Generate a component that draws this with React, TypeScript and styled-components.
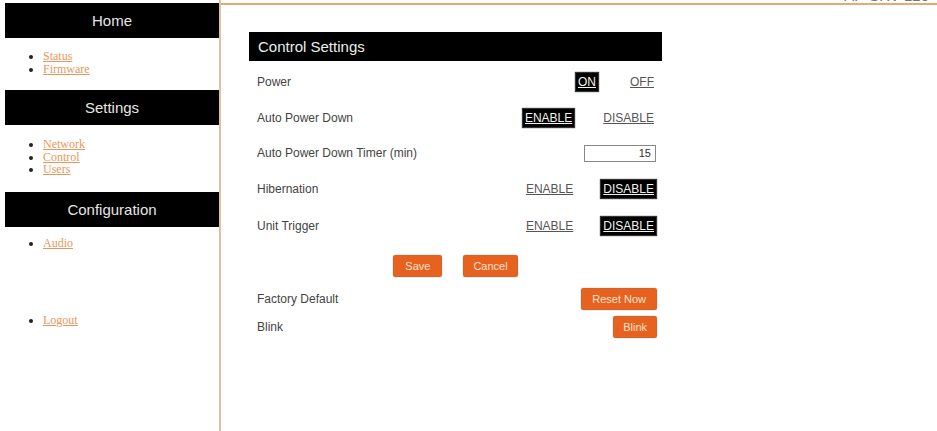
import { useState } from "react";
import styled, { createGlobalStyle, css } from "styled-components";

const GlobalStyle = createGlobalStyle`
  html, body {
    margin: 0;
    padding: 0;
    background: #fff;
  }
  body {
    font-family: "Liberation Sans", Arial, sans-serif;
  }
`;

const Page = styled.div`
  display: flex;
  min-height: 431px;
  width: 937px;
  overflow: hidden;
`;

const Sidebar = styled.nav`
  flex: 0 0 214px;
  padding: 3px 0 0 5px;
  border-right: 2px solid #dcc29f;
`;

const SideHeader = styled.div`
  height: 35px;
  display: flex;
  align-items: center;
  justify-content: center;
  background: #000;
  color: #e6e6e6;
  font-size: 15px;
`;

const LinkList = styled.ul<{ $top: number; $bottom: number }>`
  margin: ${(p) => p.$top}px 0 ${(p) => p.$bottom}px;
  padding-left: 38px;
  font-family: "Liberation Serif", "Times New Roman", serif;
  font-size: 12px;
  line-height: 12.5px;
  color: #222;
`;

const NavLink = styled.a`
  color: #e8975a;
  text-decoration: underline;
`;

const Main = styled.main`
  flex: 1;
  display: flex;
  flex-direction: column;
`;

const TopBar = styled.header`
  height: 3px;
  overflow: hidden;
  display: flex;
  justify-content: flex-end;
  align-items: flex-end;
  padding-right: 8px;
  border-bottom: 2px solid #eaa770;
  color: #777;
  font-size: 15px;
  line-height: 15px;
`;

const Panel = styled.section`
  width: 413px;
  margin: 27px 0 0 28px;
`;

const PanelTitle = styled.h2`
  margin: 0 0 2px;
  height: 29px;
  display: flex;
  align-items: center;
  padding-left: 9px;
  background: #000;
  color: #ededed;
  font-size: 15px;
  font-weight: normal;
`;

const Row = styled.div<{ $h: number }>`
  height: ${(p) => p.$h}px;
  display: flex;
  align-items: center;
  justify-content: space-between;
  padding: 0 6px 0 8px;
`;

const Label = styled.span`
  font-size: 12px;
  color: #444;
`;

const Toggle = styled.div<{ $gap: number }>`
  display: flex;
  align-items: center;
  gap: ${(p) => p.$gap}px;
`;

const Option = styled.span<{ $on?: boolean }>`
  font-size: 12px;
  line-height: 16px;
  padding: 1px 2px;
  text-decoration: underline;
  cursor: pointer;
  color: #555;
  ${(p) =>
    p.$on &&
    css`
      background: #000;
      color: #f2f2f2;
      box-shadow: 0 0 1px 1px #333;
    `}
`;

const NumberInput = styled.input`
  width: 66px;
  height: 15px;
  padding: 0 4px 0 0;
  border: 1px solid #888;
  text-align: right;
  font-family: "Liberation Sans", Arial, sans-serif;
  font-size: 11px;
  color: #333;
  outline: none;
`;

const ButtonRow = styled.div`
  display: flex;
  justify-content: center;
  gap: 23px;
  margin: 12px 0 12px;
`;

const OrangeButton = styled.button<{ $pad?: number }>`
  height: 20px;
  padding: 0 ${(p) => p.$pad ?? 11}px;
  border: none;
  border-radius: 1px;
  background: #e8621f;
  box-shadow: 0 0 1px 1px #c9541a;
  color: #fbe3d2;
  font-family: "Liberation Sans", Arial, sans-serif;
  font-size: 11px;
  cursor: pointer;
`;

const ActionRow = styled(Row)`
  padding-right: 6px;
`;

function PairToggle({
  left,
  right,
  value,
  gap,
}: {
  left: string;
  right: string;
  value: boolean;
  gap: number;
}) {
  const [on, setOn] = useState(value);
  return (
    <Toggle $gap={gap}>
      <Option $on={on} onClick={() => setOn(true)}>
        {left}
      </Option>
      <Option $on={!on} onClick={() => setOn(false)}>
        {right}
      </Option>
    </Toggle>
  );
}

export default function App() {
  const [timer, setTimer] = useState("15");

  return (
    <Page>
      <GlobalStyle />
      <Sidebar>
        <SideHeader>Home</SideHeader>
        <LinkList $top={12} $bottom={15}>
          <li>
            <NavLink href="#">Status</NavLink>
          </li>
          <li>
            <NavLink href="#">Firmware</NavLink>
          </li>
        </LinkList>
        <SideHeader>Settings</SideHeader>
        <LinkList $top={13} $bottom={16}>
          <li>
            <NavLink href="#">Network</NavLink>
          </li>
          <li>
            <NavLink href="#">Control</NavLink>
          </li>
          <li>
            <NavLink href="#">Users</NavLink>
          </li>
        </LinkList>
        <SideHeader>Configuration</SideHeader>
        <LinkList $top={10} $bottom={65}>
          <li>
            <NavLink href="#">Audio</NavLink>
          </li>
        </LinkList>
        <LinkList $top={0} $bottom={0}>
          <li>
            <NavLink href="#">Logout</NavLink>
          </li>
        </LinkList>
      </Sidebar>

      <Main>
        <TopBar>AP-SRV-120</TopBar>
        <Panel>
          <PanelTitle>Control Settings</PanelTitle>
          <Row $h={37}>
            <Label>Power</Label>
            <PairToggle left="ON" right="OFF" value={true} gap={30} />
          </Row>
          <Row $h={36}>
            <Label>Auto Power Down</Label>
            <PairToggle left="ENABLE" right="DISABLE" value={true} gap={27} />
          </Row>
          <Row $h={34}>
            <Label>Auto Power Down Timer (min)</Label>
            <NumberInput value={timer} onChange={(e) => setTimer(e.target.value)} />
          </Row>
          <Row $h={37}>
            <Label>Hibernation</Label>
            <PairToggle left="ENABLE" right="DISABLE" value={false} gap={26} />
          </Row>
          <Row $h={37}>
            <Label>Unit Trigger</Label>
            <PairToggle left="ENABLE" right="DISABLE" value={false} gap={26} />
          </Row>
          <ButtonRow>
            <OrangeButton $pad={11}>Save</OrangeButton>
            <OrangeButton $pad={9}>Cancel</OrangeButton>
          </ButtonRow>
          <ActionRow $h={21}>
            <Label>Factory Default</Label>
            <OrangeButton $pad={10}>Reset Now</OrangeButton>
          </ActionRow>
          <ActionRow $h={36}>
            <Label>Blink</Label>
            <OrangeButton $pad={9}>Blink</OrangeButton>
          </ActionRow>
        </Panel>
      </Main>
    </Page>
  );
}
